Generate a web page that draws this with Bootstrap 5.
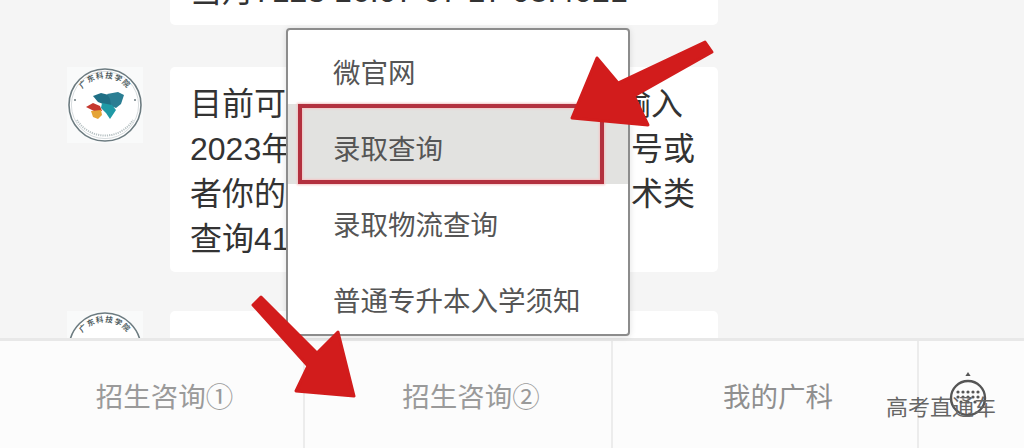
<!doctype html>
<html lang="zh-CN">
<head>
<meta charset="utf-8">
<title>录取查询</title>
<link rel="stylesheet" href="https://cdn.jsdelivr.net/npm/bootstrap@5.3.0/dist/css/bootstrap.min.css">
<style>
html,body{height:448px;overflow:hidden}
body{background:#f5f5f5;font-family:"Liberation Sans","Noto Sans CJK SC",sans-serif;color:#333}
.stage{width:1024px;height:448px}
.chat-pane{height:338px;overflow:hidden;padding-left:67px;gap:39px}
.chat-top{margin-top:-172px;margin-bottom:3px}
.chat-row{gap:27px}
.avatar-box{width:76px;height:76px;flex:none;background:#f9fafa}
.avatar-box svg{width:76px;height:76px;display:block}
.bubble{width:548px;background:#fff;border-radius:5px;font-size:32px;line-height:45px;padding:15px 23px 10px 20px;white-space:nowrap;overflow:hidden}
.bubble-tall{height:197px;padding-top:6px}
.bubble-main{height:205px}
.bubble-next{height:60px}
.line-first{padding-right:12px}
.tab-strip{height:110px;background:#fcfcfc;border-top:3px solid #e8e8e8}
.tab-cell{height:100%;font-size:27.5px;color:#9a9a9a;border-right:2px solid #ececec;padding-left:26px;padding-top:6px;white-space:nowrap}
.tab-a{width:305px}
.tab-b{width:308px}
.tab-c{width:306px;color:#8f8f8f}
.tab-d{width:105px;border-right:0;padding:0 0 0 8px}
.tab-d svg{width:48px;height:56px;margin-top:7px;margin-left:-16px}
.pop-menu.dropdown-menu{left:286px;top:28px;width:344px;height:308px;padding:6px 0 0;margin:0;border:2px solid #8c8c8c;border-radius:4px;background:#fff;box-shadow:0 1px 6px rgba(0,0,0,.12)}
.pop-menu .dropdown-item{height:76px;padding:8px 0 0 45px;font-size:27.5px;color:#555;display:flex;align-items:center}
.pop-menu .dropdown-item:first-child{height:68px}
.pop-menu .dropdown-item.active,.pop-menu .dropdown-item:active{height:80px;padding-top:12px;background:#e2e2e0;color:#555}
.frame-red{left:10px;top:74px;width:306px;height:80px;border:4px solid #b3313f;box-shadow:0 0 2px 1px #f4c4c4,inset 0 0 2px 1px #f4c4c4;pointer-events:none}
.arrow-layer{left:0;top:0;width:1024px;height:448px;pointer-events:none;z-index:1010}
.water-mark{left:886px;top:395px;font-size:22px;line-height:26px;color:#666;white-space:nowrap;z-index:1011}
</style>
</head>
<body>
<div class="stage position-relative overflow-hidden">
  <div class="chat-pane d-flex flex-column">
    <div class="chat-row chat-top d-flex">
      <div class="avatar-box invisible"></div>
      <div class="bubble bubble-tall"><br><br><br>当月7123 16:07 07 17 08:4021</div>
    </div>
    <div class="chat-row d-flex">
      <div class="avatar-box">
        <svg viewBox="0 0 76 76" role="img" aria-label="广东科技学院">
          <circle cx="38" cy="38" r="36" fill="#fff" stroke="#6c7b80" stroke-width="1.6"/>
          <circle cx="38" cy="38" r="33.6" fill="none" stroke="#c4ccce" stroke-width=".7"/>
          <path id="ring-a" d="M9 40A29 29 0 0 1 67 40" fill="none"/>
          <text font-size="7.5" font-weight="700" fill="#4e5c60" font-family="'Noto Sans CJK SC',sans-serif" letter-spacing="1.2" text-anchor="middle"><textPath href="#ring-a" startOffset="50%">广东科技学院</textPath></text>
          <path d="M10 53A33 33 0 0 0 66 53" fill="none" stroke="#b8c2c4" stroke-width="2" stroke-dasharray="1.2 1"/>
          <circle cx="8" cy="33" r="1" fill="#6c7b80"/><circle cx="68" cy="33" r="1" fill="#6c7b80"/>
          <path d="M26 29l8-3 8 2 4 8-2 4-8-3-5-2z" fill="#1f6f85"/>
          <path d="M40 27l11-2 6 3-3 9-5 4-5-2-1-7z" fill="#2b7e93"/>
          <path d="M35 36l10 2 4 5-6 9-4-6-5-5z" fill="#1f9aa6"/>
          <path d="M19 40l7-4 7 3 2 5-8 0z" fill="#c5382f"/>
          <path d="M24 44l10-1 1 5-4 4-5-2z" fill="#e5a436"/>
        </svg>
      </div>
      <div class="bubble bubble-main">
        <div class="line-first d-flex justify-content-between"><span>目前可查询</span><span>录取结果，请输入</span></div>
        <div class="d-flex justify-content-between"><span>2023年高考</span><span>准考证号、报名号或</span></div>
        <div class="d-flex justify-content-between"><span>者你的身份</span><span>证号码，艺术类</span></div>
        <div>查询41</div>
      </div>
    </div>
    <div class="chat-row d-flex">
      <div class="avatar-box">
        <svg viewBox="0 0 76 76" role="img" aria-label="广东科技学院">
          <circle cx="38" cy="38" r="36" fill="#fff" stroke="#6c7b80" stroke-width="1.6"/>
          <path id="ring-b" d="M9 40A29 29 0 0 1 67 40" fill="none"/>
          <text font-size="7.5" font-weight="700" fill="#4e5c60" font-family="'Noto Sans CJK SC',sans-serif" letter-spacing="1.2" text-anchor="middle"><textPath href="#ring-b" startOffset="50%">广东科技学院</textPath></text>
        </svg>
      </div>
      <div class="bubble bubble-next"></div>
    </div>
  </div>

  <div class="tab-strip d-flex">
    <div class="tab-cell tab-a d-flex align-items-center justify-content-center">招生咨询①</div>
    <div class="tab-cell tab-b d-flex align-items-center justify-content-center">招生咨询②</div>
    <div class="tab-cell tab-c d-flex align-items-center justify-content-center">我的广科</div>
    <div class="tab-cell tab-d d-flex align-items-center justify-content-center">
      <svg viewBox="0 0 48 56" aria-hidden="true">
        <path d="M24 2l2.6 4h-5.2z" fill="#555"/>
        <circle cx="24" cy="28" r="17" fill="none" stroke="#555" stroke-width="2.4"/>
        <g fill="#555">
          <circle cx="14" cy="22" r="1.6"/><circle cx="19" cy="22" r="1.6"/><circle cx="24" cy="22" r="1.6"/><circle cx="29" cy="22" r="1.6"/><circle cx="34" cy="22" r="1.6"/>
          <circle cx="14" cy="27" r="1.6"/><circle cx="19" cy="27" r="1.6"/><circle cx="24" cy="27" r="1.6"/><circle cx="29" cy="27" r="1.6"/><circle cx="34" cy="27" r="1.6"/>
          <circle cx="17" cy="32" r="1.6"/><circle cx="24" cy="32" r="1.6"/><circle cx="31" cy="32" r="1.6"/>
        </g>
      </svg>
    </div>
  </div>

  <div class="pop-menu dropdown-menu show position-absolute">
    <a class="dropdown-item" href="#">微官网</a>
    <a class="dropdown-item active" href="#">录取查询</a>
    <a class="dropdown-item" href="#">录取物流查询</a>
    <a class="dropdown-item" href="#">普通专升本入学须知</a>
    <div class="frame-red position-absolute"></div>
  </div>

  <svg class="arrow-layer position-absolute" viewBox="0 0 1024 448" aria-hidden="true">
    <g fill="#d21c1c" stroke="#d21c1c" stroke-width="3" stroke-linejoin="round">
      <path d="M705 42L712 52L634 96L648 125L572 118L597 58L618 83z"/>
      <path d="M253 305L261 297L317 353L338 332L354 396L296 391L308 366z"/>
    </g>
  </svg>
  <div class="water-mark position-absolute">高考直通车</div>
</div>
<script src="https://cdn.jsdelivr.net/npm/bootstrap@5.3.0/dist/js/bootstrap.bundle.min.js"></script>
</body>
</html>
